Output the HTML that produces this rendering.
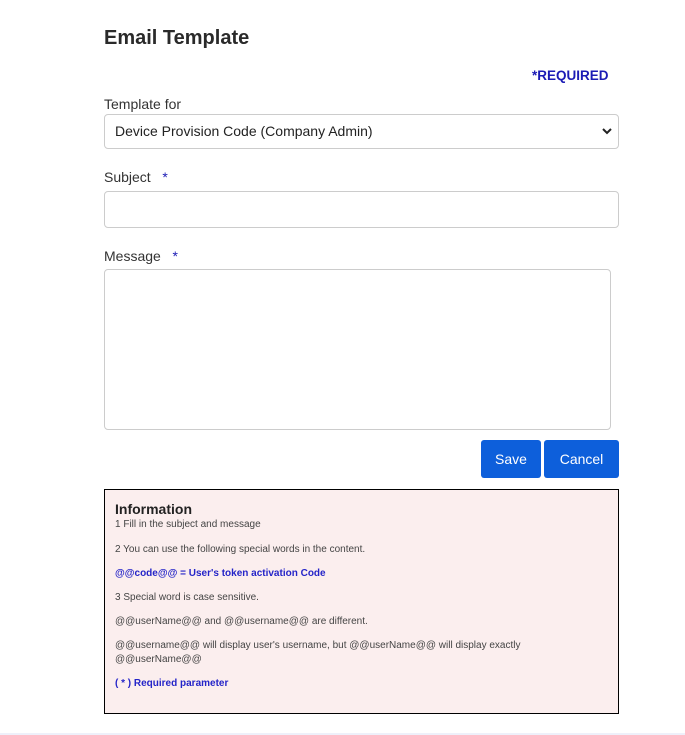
<!DOCTYPE html>
<html><head><style>
body{margin:0;width:685px;height:735px;background:#fff;font-family:"Liberation Sans",sans-serif;color:#222;position:relative;overflow:hidden}
.a{position:absolute}
h1{position:absolute;left:104px;top:27px;margin:0;font-size:20px;font-weight:bold;color:#2a2a2a}
.lbl{font-size:14px;color:#333}
.box{border:1px solid #ccc;border-radius:4px;background:#fff;box-sizing:border-box}
.btn{background:#0d5fdb;color:#fff;font-size:14px;border-radius:3px;text-align:center;line-height:38px}
.info{left:104px;top:489px;width:515px;height:225px;box-sizing:border-box;border:1px solid #000;background:#fbeeee;padding:10px 10px;font-size:10px;line-height:14px;color:#444}
.info p{margin:0 0 10px}
.bl{color:#2424c8;font-weight:bold}
</style></head><body>
<h1>Email Template</h1>
<div class="a" style="left:532px;top:68px;font-size:13.5px;font-weight:bold;color:#1b1bb5">*REQUIRED</div>
<div class="a lbl" style="left:104px;top:96px">Template for</div>
<div class="a box" style="left:104px;top:114px;width:515px;height:35px;font-size:14px;line-height:33px;padding-left:10px;color:#222">Device Provision Code (Company Admin)
<svg class="a" style="right:6px;top:12px" width="10" height="8" viewBox="0 0 10 8"><path d="M1 2l4 4 4-4" fill="none" stroke="#222" stroke-width="2"/></svg></div>
<div class="a lbl" style="left:104px;top:169px">Subject &nbsp; <span style="color:#1b1bb5">*</span></div>
<div class="a box" style="left:104px;top:191px;width:515px;height:37px"></div>
<div class="a lbl" style="left:104px;top:248px">Message &nbsp; <span style="color:#1b1bb5">*</span></div>
<div class="a box" style="left:104px;top:269px;width:507px;height:161px"></div>
<div class="a btn" style="left:481px;top:440px;width:60px;height:38px">Save</div>
<div class="a btn" style="left:544px;top:440px;width:75px;height:38px">Cancel</div>
<div class="a info">
<div style="font-size:14px;line-height:18px;font-weight:bold;color:#222">Information</div>
<p style="margin-bottom:11px">1 Fill in the subject and message</p>
<p>2 You can use the following special words in the content.</p>
<p class="bl">@@code@@ = User's token activation Code</p>
<p>3 Special word is case sensitive.</p>
<p>@@userName@@ and @@username@@ are different.</p>
<p>@@username@@ will display user's username, but @@userName@@ will display exactly<br>@@userName@@</p>
<p class="bl">( * ) Required parameter</p>
</div>
<div class="a" style="left:0;top:733px;width:685px;height:2px;background:#eef0fa"></div>
</body></html>
